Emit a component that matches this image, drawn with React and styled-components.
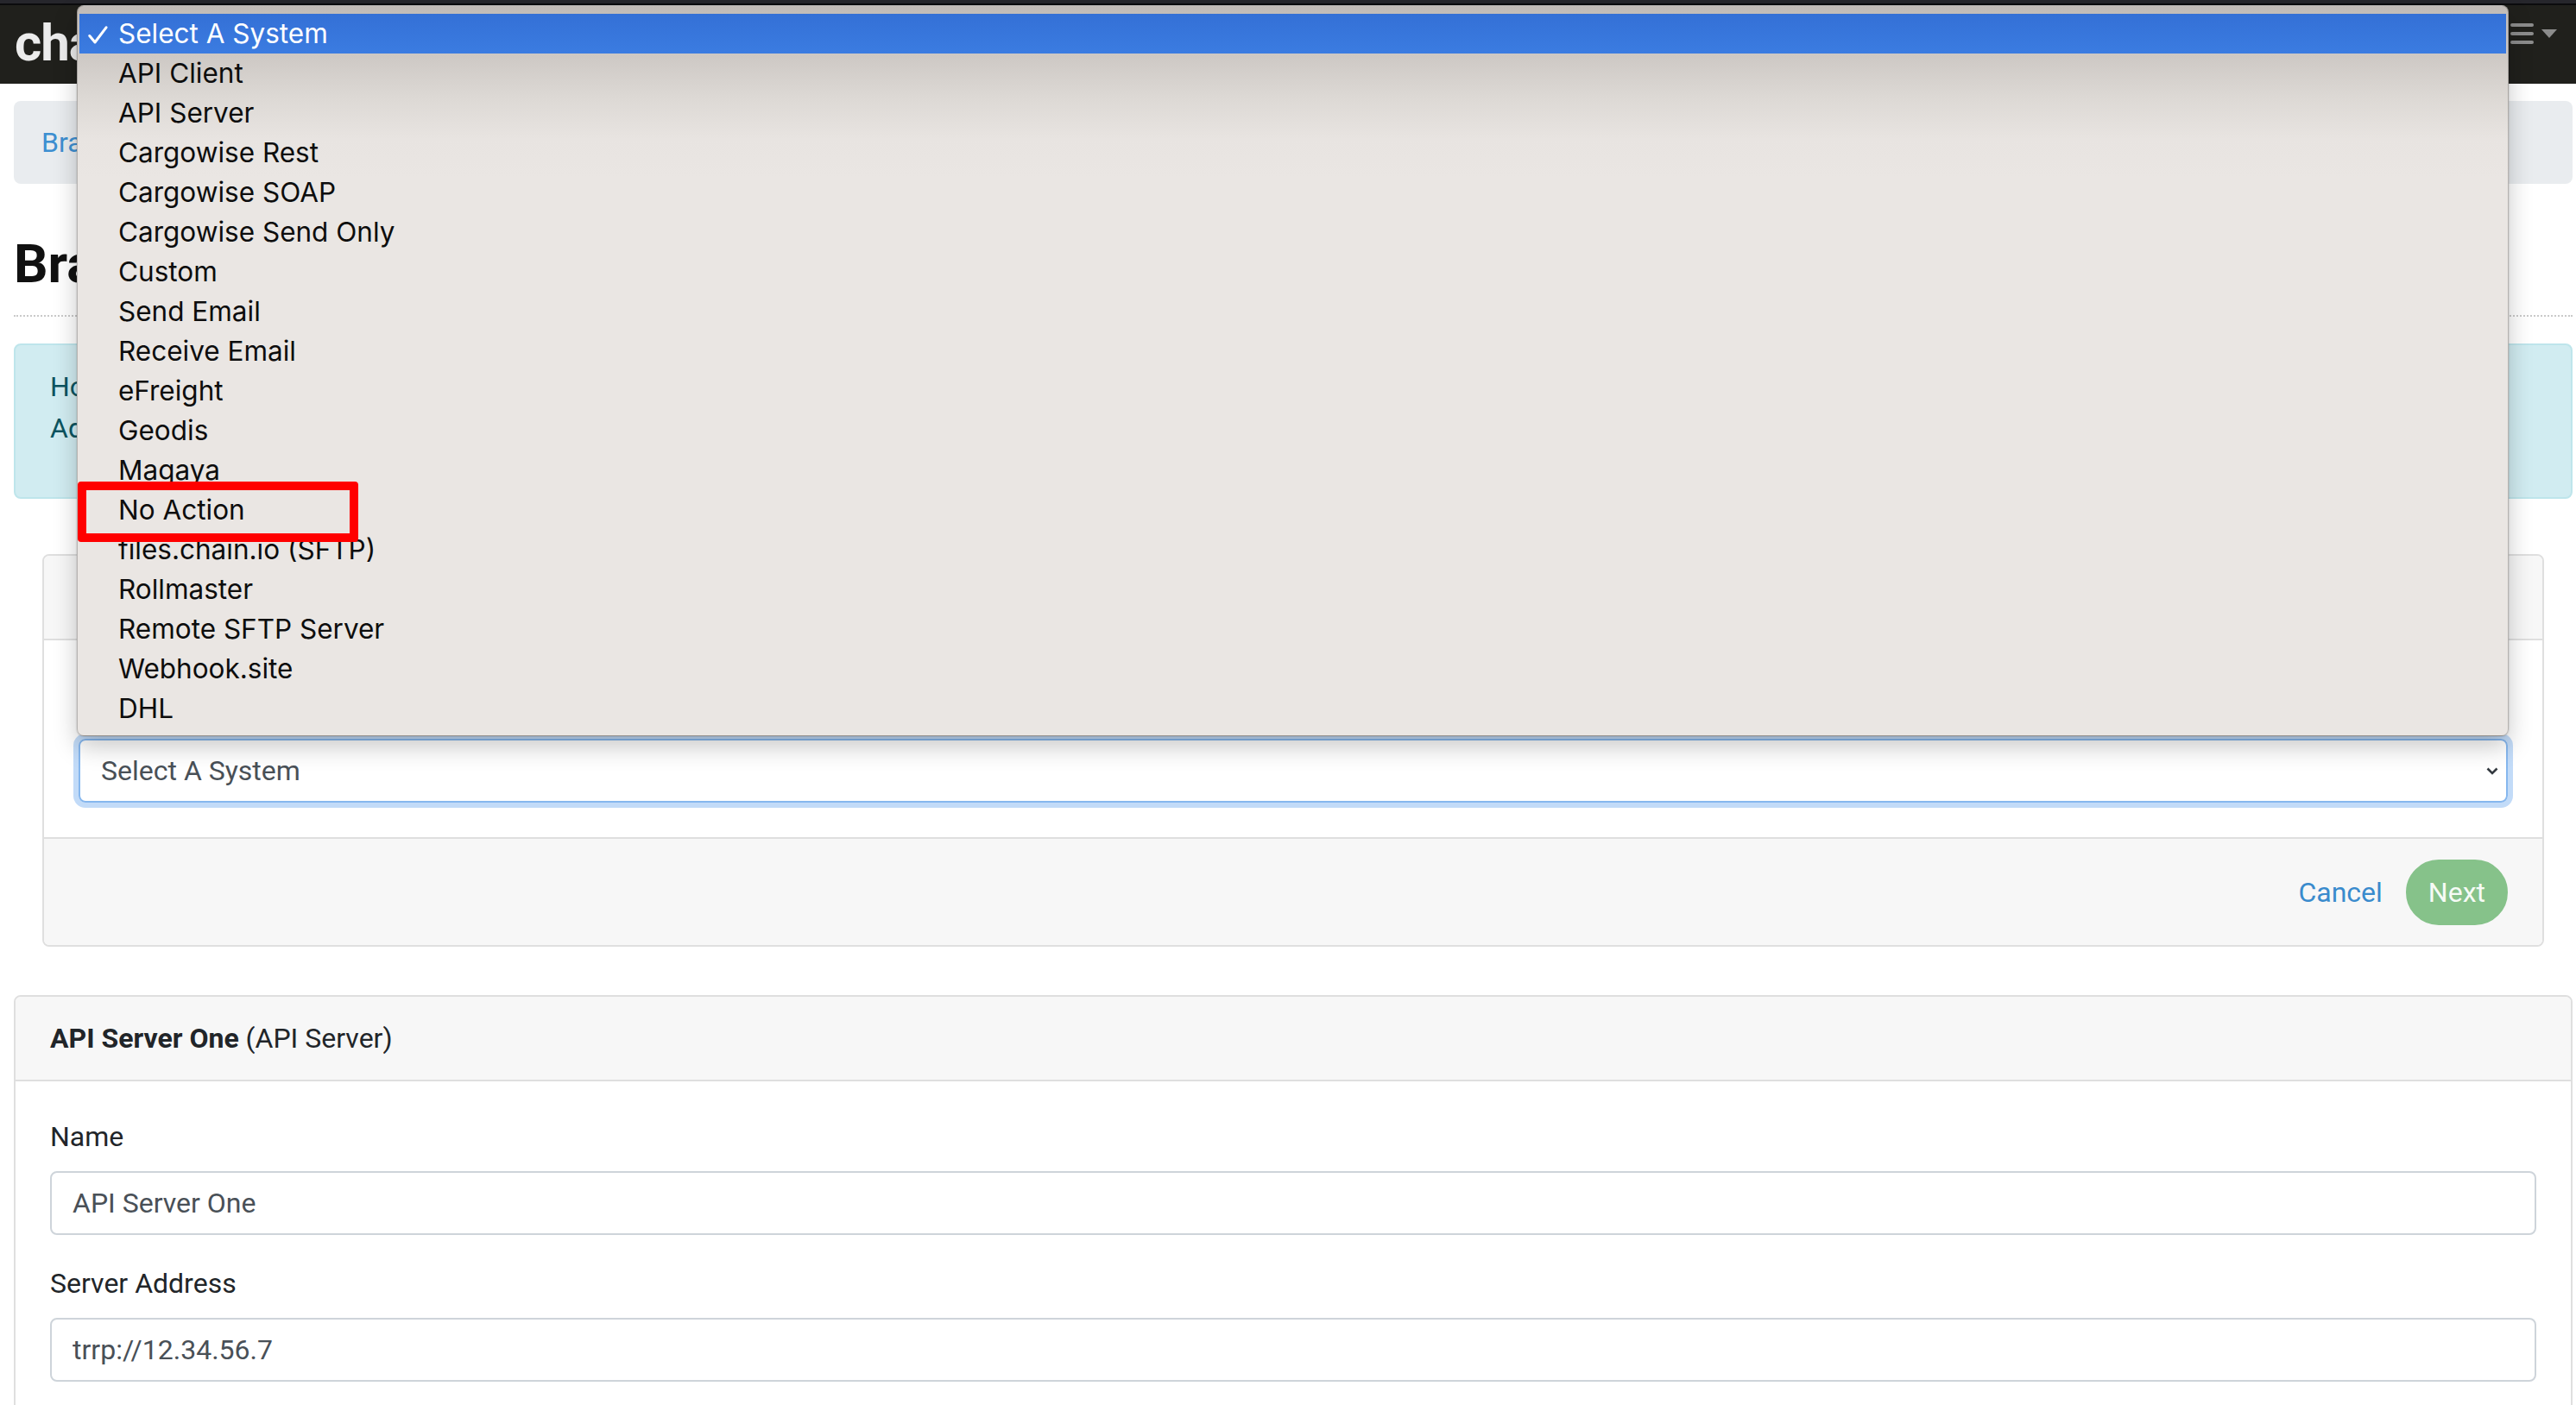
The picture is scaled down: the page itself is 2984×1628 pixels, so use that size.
import React from 'react';
import styled, { createGlobalStyle } from 'styled-components';

const SYSTEMS = [
  'Select A System',
  'API Client',
  'API Server',
  'Cargowise Rest',
  'Cargowise SOAP',
  'Cargowise Send Only',
  'Custom',
  'Send Email',
  'Receive Email',
  'eFreight',
  'Geodis',
  'Magaya',
  'No Action',
  'files.chain.io (SFTP)',
  'Rollmaster',
  'Remote SFTP Server',
  'Webhook.site',
  'DHL',
];

const GlobalStyle = createGlobalStyle`
  html, body {
    margin: 0;
    padding: 0;
    overflow: hidden;
    background: #fff;
  }
  body {
    font-family: Roboto, "Liberation Sans", Arial, sans-serif;
    color: #212529;
  }
  * { box-sizing: border-box; }
`;

const Page = styled.div`
  position: relative;
  width: 2984px;
  height: 1628px;
  overflow: hidden;
`;

const WindowEdge = styled.div`
  height: 6px;
  background: #26262c;
  border-bottom: 2px solid #0b0b0d;
`;

const Navbar = styled.header`
  height: 91px;
  background: #20201c;
  display: flex;
  justify-content: space-between;
  align-items: flex-start;
  padding: 0 22px 0 17px;
`;

const Logo = styled.div`
  margin-top: 14px;
  font-size: 60px;
  line-height: 60px;
  font-weight: 700;
  color: #ececec;
  letter-spacing: -1px;
`;

const NavToggle = styled.div`
  margin-top: 21px;
  display: flex;
  align-items: center;
  gap: 9px;
`;

const Container = styled.main`
  padding: 20px 4px 0 16px;
`;

const Breadcrumb = styled.nav`
  height: 96px;
  padding: 24px 32px;
  background: #e9ecef;
  border-radius: 8px;
  font-size: 32px;
  line-height: 48px;
  color: #3d8fd1;
`;

const PageHeader = styled.div`
  margin-top: 56px;
  padding-bottom: 22px;
  border-bottom: 2px dotted #c9c9c9;
`;

const Title = styled.h1`
  margin: 0;
  font-size: 62px;
  line-height: 74px;
  font-weight: 700;
  color: #111;
`;

const Alert = styled.div`
  margin: 31px 0 32px;
  padding: 24px 40px;
  background: #d1ecf1;
  border: 2px solid #bee5eb;
  border-radius: 8px;
  color: #0c5460;
  font-size: 32px;
  line-height: 48px;

  p { margin: 0 0 32px; }
`;

const StepWrapper = styled.section`
  padding: 32px 33px;
  margin-bottom: 24px;
`;

const Card = styled.div`
  background: #fff;
  border: 2px solid #dfdfdf;
  border-radius: 8px;
  overflow: hidden;
`;

const CardHeader = styled.div`
  padding: 24px 40px;
  background: #f7f7f7;
  border-bottom: 2px solid #dfdfdf;
  font-size: 32px;
  line-height: 48px;

  strong { font-weight: 700; }
`;

const CardBody = styled.div`
  padding: 40px;
`;

const CardFooter = styled.div`
  padding: 24px 40px 23px;
  background: #f7f7f7;
  border-top: 2px solid #dfdfdf;
  display: flex;
  justify-content: flex-end;
  align-items: center;
  gap: 3px;
`;

const FormGroup = styled.div`
  margin-bottom: 32px;
`;

const Label = styled.label`
  display: block;
  font-size: 32px;
  line-height: 48px;
  margin-bottom: ${(p) => p.$gap || 16}px;
`;

const TextInput = styled.input`
  display: block;
  width: 100%;
  height: 74px;
  padding: 0 24px;
  border: 2px solid #ced4da;
  border-radius: 8px;
  background: #fff;
  font-family: Roboto, "Liberation Sans", Arial, sans-serif;
  font-size: 32px;
  color: #495057;
  outline: none;
`;

const SelectBox = styled.div`
  height: 74px;
  padding: 0 9px 0 24px;
  border: 2px solid #86b7ee;
  border-radius: 8px;
  box-shadow: 0 0 0 6px #c2dbf8;
  display: flex;
  align-items: center;
  justify-content: space-between;
  font-size: 32px;
  color: #495057;
`;

const LinkButton = styled.button`
  border: 0;
  background: none;
  padding: 12px 24px;
  font-family: inherit;
  font-size: 32px;
  line-height: 48px;
  color: #3a8bcd;
`;

const PillButton = styled.button`
  border: 2px solid #86c28a;
  background: #86c28a;
  border-radius: 38px;
  padding: 12px 24px;
  font-family: inherit;
  font-size: 32px;
  line-height: 48px;
  color: #f6fbf6;
`;

const SelectPopup = styled.ul`
  position: absolute;
  left: 89px;
  top: 6px;
  width: 2817px;
  margin: 0;
  padding: 9px 2px 8px;
  list-style: none;
  border: 1px solid rgba(0, 0, 0, 0.22);
  border-radius: 8px;
  background: linear-gradient(
    to bottom,
    #c1bbb7 0px,
    #cdc8c4 56px,
    #dcd8d4 104px,
    #e8e4e1 154px,
    #eae6e3 200px,
    #eae6e3 100%
  );
  box-shadow: 0 12px 28px rgba(0, 0, 0, 0.22), 0 0 2px rgba(0, 0, 0, 0.25);
  font-family: Inter, "Noto Sans", sans-serif;
  z-index: 10;
`;

const PopupItem = styled.li`
  position: relative;
  height: 46px;
  padding-left: 45px;
  font-size: 31.5px;
  line-height: 46px;
  color: ${(p) => (p.$active ? '#fff' : '#0d0d0d')};
  background: ${(p) => (p.$active ? 'linear-gradient(#3470d6, #3b7ce1)' : 'transparent')};
  white-space: nowrap;
`;

const CheckMark = styled.svg`
  position: absolute;
  left: 10px;
  top: 14px;
`;

const Highlight = styled.span`
  position: absolute;
  left: -2px;
  top: -10px;
  width: 325px;
  height: 70px;
  border: 10px solid #ff0000;
  border-radius: 4px;
  z-index: 2;
`;

const App = () => {
  return (
    <Page>
      <GlobalStyle />
      <WindowEdge />
      <Navbar>
        <Logo>chain.io</Logo>
        <NavToggle>
          <svg width='27' height='24' viewBox='0 0 27 24'>
            <rect x='0' y='0' width='27' height='4' rx='2' fill='#8c8c8c' />
            <rect x='0' y='10' width='27' height='4' rx='2' fill='#8c8c8c' />
            <rect x='0' y='20' width='27' height='4' rx='2' fill='#8c8c8c' />
          </svg>
          <svg width='18' height='10' viewBox='0 0 18 10'>
            <polygon points='0,0 18,0 9,10' fill='#8c8c8c' />
          </svg>
        </NavToggle>
      </Navbar>

      <Container>
        <Breadcrumb>Brands</Breadcrumb>
        <PageHeader>
          <Title>Brand</Title>
        </PageHeader>
        <Alert>
          <p>
            How it works
            <br />
            Add a step
          </p>
        </Alert>

        <StepWrapper>
          <Card>
            <CardHeader>Add A Step</CardHeader>
            <CardBody>
              <Label $gap={26}>System</Label>
              <SelectBox>
                <span>Select A System</span>
                <svg width='14' height='9' viewBox='0 0 14 9'>
                  <polyline
                    points='1.5,1.5 7,7 12.5,1.5'
                    fill='none'
                    stroke='#343a40'
                    strokeWidth='2.6'
                  />
                </svg>
              </SelectBox>
            </CardBody>
            <CardFooter>
              <LinkButton>Cancel</LinkButton>
              <PillButton>Next</PillButton>
            </CardFooter>
          </Card>
        </StepWrapper>

        <Card>
          <CardHeader>
            <strong>API Server One</strong> (API Server)
          </CardHeader>
          <CardBody>
            <FormGroup>
              <Label>Name</Label>
              <TextInput readOnly value='API Server One' />
            </FormGroup>
            <FormGroup>
              <Label>Server Address</Label>
              <TextInput readOnly value='trrp://12.34.56.7' />
            </FormGroup>
          </CardBody>
        </Card>
      </Container>

      <SelectPopup>
        {SYSTEMS.map((name, i) => (
          <PopupItem key={name} $active={i === 0}>
            {i === 0 && (
              <CheckMark width='23' height='21' viewBox='0 0 23 21'>
                <polyline
                  points='1.8,11.5 8,19 21,1.8'
                  fill='none'
                  stroke='#fff'
                  strokeWidth='3'
                  strokeLinecap='round'
                  strokeLinejoin='round'
                />
              </CheckMark>
            )}
            {name}
            {name === 'No Action' && <Highlight />}
          </PopupItem>
        ))}
      </SelectPopup>
    </Page>
  );
};

export default App;
